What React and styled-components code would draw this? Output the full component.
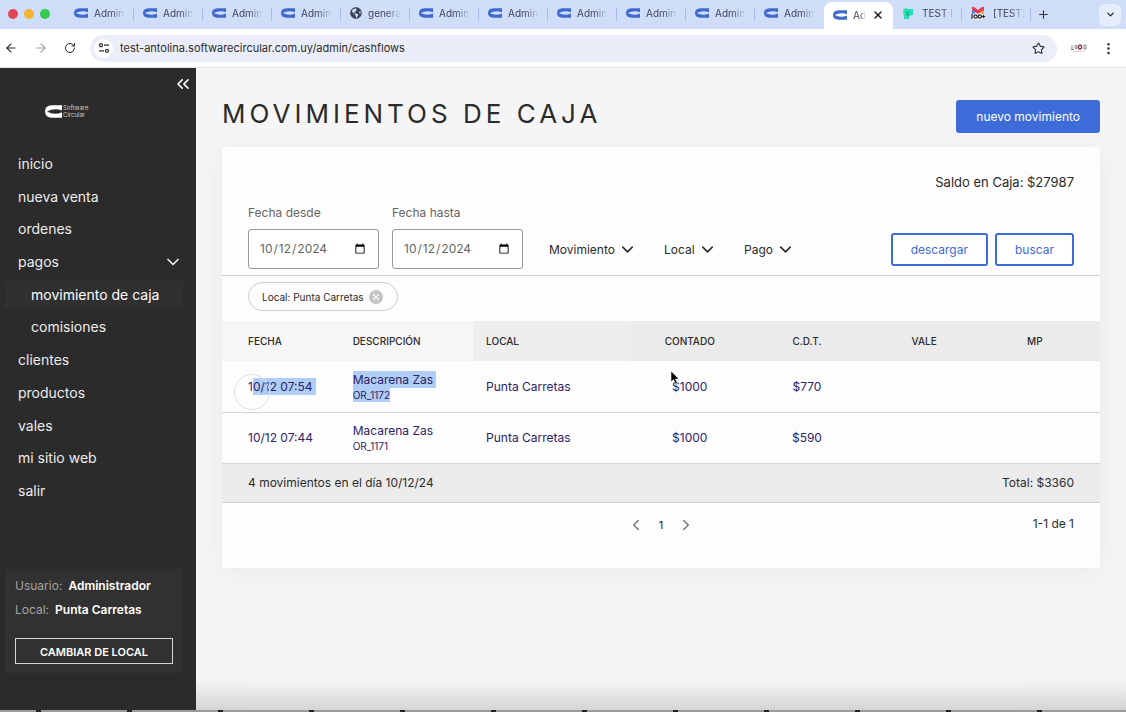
import React from 'react'
import styled, { createGlobalStyle } from 'styled-components'
import {
  ArrowLeft,
  ArrowRight,
  ChevronDown,
  ChevronLeft,
  ChevronRight,
  ChevronsLeft,
  EllipsisVertical,
  Plus,
  RotateCw,
  Star,
  X,
} from 'lucide-react'
import { FaGlobeAmericas } from 'react-icons/fa'

const GlobalStyle = createGlobalStyle`
  * {
    box-sizing: border-box;
  }
  body {
    margin: 0;
    font-family: Inter, "Liberation Sans", sans-serif;
    color: #2b2b2b;
    background: #f5f5f5;
  }
  button, input, select {
    font: inherit;
    color: inherit;
  }
  button {
    cursor: pointer;
  }
`

const Window = styled.div`
  display: flex;
  flex-direction: column;
  min-height: 100vh;
  overflow: hidden;
`

/* browser chrome */
const TabStrip = styled.div`
  display: flex;
  align-items: center;
  height: 29px;
  padding: 0 5px 0 8px;
  background: #cfddf9;
`
const Lights = styled.div`
  display: flex;
  gap: 6px;
  width: 57px;
  flex-shrink: 0;
`
const Light = styled.span`
  width: 10px;
  height: 10px;
  margin-bottom: 2px;
  border-radius: 50%;
  background: ${(props) => props.$color};
`
const Tab = styled.button`
  display: flex;
  align-items: center;
  gap: 6px;
  width: 69px;
  height: 27px;
  padding: 0 9px 1px;
  border: 0;
  font-size: 10px;
  color: #3c4459;
  background: ${(props) => (props.$active ? '#fff' : 'none')};
  border-radius: ${(props) => (props.$active ? '8px 8px 0 0' : '0')};
  align-self: ${(props) => (props.$active ? 'flex-end' : 'flex-start')};
  svg {
    flex-shrink: 0;
  }
`
const WideTab = styled(Tab)`
  gap: 8px;
  padding: 0 6px 1px 9px;
`
const TabText = styled.span`
  flex: 1;
  min-width: 0;
  overflow: hidden;
  white-space: nowrap;
  text-align: left;
  mask-image: linear-gradient(90deg, #000 55%, transparent);
`
const Divider = styled.span`
  width: 1px;
  height: 13px;
  margin-left: -1px;
  background: #a9bce4;
`
const PlainButton = styled.button`
  display: flex;
  align-items: center;
  justify-content: center;
  padding: 0;
  border: 0;
  background: none;
  color: ${(props) => props.$color || 'inherit'};
`
const NewTab = styled(PlainButton)`
  width: 25px;
  height: 24px;
`
const TabSearch = styled(PlainButton)`
  width: 22px;
  height: 22px;
  margin-left: auto;
  border-radius: 6px;
  background: #e6eefc;
`
const AddressBar = styled.div`
  display: flex;
  align-items: center;
  gap: 14px;
  height: 39px;
  padding: 0 10px 0 4px;
  background: #fff;
  border-bottom: 1px solid #e0e2ea;
`
const NavButtons = styled.div`
  display: flex;
  gap: 16px;
`
const UrlBox = styled.div`
  display: flex;
  align-items: center;
  flex: 1;
  gap: 7px;
  height: 27px;
  padding: 0 12px 0 4px;
  border-radius: 14px;
  background: #ebeef8;
`
const SiteInfo = styled(PlainButton)`
  width: 19px;
  height: 19px;
  border-radius: 50%;
  background: #fff;
`
const Url = styled.input`
  flex: 1;
  min-width: 0;
  padding: 0;
  border: 0;
  background: none;
  font-size: 11px;
`

/* page */
const Page = styled.div`
  display: flex;
  flex: 1;
`
const Sidebar = styled.aside`
  display: flex;
  flex-direction: column;
  flex-shrink: 0;
  width: 196px;
  padding: 6px 13px 37px 5px;
  background: #2b2b2b;
  color: #fff;
`
const Collapse = styled(PlainButton)`
  align-self: flex-end;
  width: 20px;
  height: 20px;
  margin-right: -10px;
`
const Logo = styled.a`
  display: flex;
  align-items: center;
  gap: 1px;
  height: 14px;
  margin: 10px 0 29px 40px;
  color: #c9c9c9;
  font-size: 6px;
  line-height: 7px;
  text-decoration: none;
`
const Menu = styled.nav`
  display: grid;
  grid-auto-rows: 1fr;
  height: 360px;
`
const MenuItem = styled.a`
  display: flex;
  align-items: center;
  justify-content: space-between;
  margin: 3px 0;
  padding: 0 0 0 ${(props) => (props.$sub ? '26px' : '13px')};
  font-size: 14px;
  color: ${(props) => (props.$active ? '#fff' : '#ececec')};
  background: ${(props) => (props.$active ? '#303030' : 'none')};
  text-decoration: none;
`
const UserCard = styled.div`
  display: flex;
  flex-direction: column;
  margin-top: auto;
  padding: 5px 10px 9px;
  background: #313131;
  font-size: 12px;
  line-height: 24px;
`
const UserLine = styled.div`
  color: #a3a3a3;
  b {
    margin-left: 6px;
    font-weight: 600;
    color: #fff;
  }
`
const ChangeStore = styled.button`
  height: 26px;
  margin-top: 16px;
  border: 1px solid #d5d5d5;
  background: none;
  font-size: 11px;
  font-weight: 600;
  color: #fff;
`
const Main = styled.main`
  flex: 1;
  min-width: 0;
  padding: 32px 26px 0;
  background: linear-gradient(#f5f5f5 calc(100% - 30px), #d4d4d4);
`
const Header = styled.header`
  display: flex;
  justify-content: space-between;
  height: 47px;
`
const Title = styled.h1`
  margin: 0;
  font-size: 26px;
  line-height: 28px;
  font-weight: 400;
  letter-spacing: 4px;
  text-transform: uppercase;
`
const Button = styled.button`
  height: 33px;
  padding: 0 18px;
  border: 2px solid #3d6bd8;
  border-radius: 3px;
  font-size: 12px;
  white-space: nowrap;
  background: ${(props) => (props.$primary ? '#3d6bd8' : '#fff')};
  color: ${(props) => (props.$primary ? '#fff' : '#3d6bd8')};
`
const Card = styled.section`
  position: relative;
  background: #fdfdfd;
  box-shadow: 0 4px 24px rgba(0, 0, 0, 0.05);
`
const Balance = styled.p`
  margin: 0;
  padding: 25px 26px 0;
  font-size: 13px;
  line-height: 20px;
  text-align: right;
`
const Filters = styled.form`
  display: flex;
  align-items: flex-end;
  gap: 13px;
  padding: 11px 26px 6px;
  border-bottom: 1px solid #d0d0d0;
`
const Field = styled.label`
  display: flex;
  flex-direction: column;
  gap: 6px;
  font-size: 12px;
  line-height: 20px;
  color: #666;
`
const DateInput = styled.input`
  width: 131px;
  height: 40px;
  padding: 0 10px;
  border: 1px solid #999;
  border-radius: 3px;
  background: #fff;
`
const Selects = styled.div`
  display: flex;
  gap: 27px;
  flex: 1;
  margin-left: 13px;
`
const SelectBox = styled.div`
  position: relative;
  display: flex;
  align-items: center;
  height: 40px;
  svg {
    position: absolute;
    right: 0;
    pointer-events: none;
  }
`
const Select = styled.select`
  appearance: none;
  padding: 0 22px 0 0;
  border: 0;
  background: none;
  font-size: 12px;
`
const Actions = styled.div`
  display: flex;
  align-items: center;
  gap: 7px;
  height: 40px;
`
const Chips = styled.div`
  display: flex;
  padding: 6px 26px 10px;
`
const Chip = styled.span`
  display: flex;
  align-items: center;
  gap: 5px;
  height: 29px;
  padding: 0 14px 0 13px;
  border: 1px solid #ccc;
  border-radius: 15px;
  font-size: 10px;
`
const ChipClose = styled(PlainButton)`
  width: 14px;
  height: 14px;
  border-radius: 50%;
  background: #c4c4c4;
`
const Table = styled.table`
  width: 100%;
  table-layout: fixed;
  border-collapse: collapse;
`
const HeadCell = styled.th`
  height: 40px;
  padding: 0 13px;
  font-size: 10px;
  font-weight: 500;
  text-align: ${(props) => (props.$center ? 'center' : 'left')};
  background: ${(props) => props.$bg || '#ebebeb'};
  &:first-child {
    padding-left: 26px;
  }
  &:last-child {
    padding-right: 26px;
  }
`
const Cell = styled.td`
  height: 51px;
  padding: 0 13px;
  border-bottom: 1px solid #d6d6d6;
  font-size: 12px;
  line-height: 17px;
  color: #2d2369;
  white-space: nowrap;
  text-align: ${(props) => (props.$center ? 'center' : 'left')};
  &:first-child {
    padding-left: 26px;
  }
`
const FootCell = styled.td`
  height: 39px;
  padding: 0 26px;
  border-top: 1px solid #d0d0d0;
  border-bottom: 1px solid #d0d0d0;
  background: #ebebeb;
  font-size: 12px;
  text-align: ${(props) => (props.$right ? 'right' : 'left')};
`
const Order = styled.div`
  font-size: 10px;
  line-height: 14px;
`
const Mark = styled.span`
  display: inline-block;
  padding-right: ${(props) => (props.$space ? '3px' : '0')};
  background: ${(props) => (props.$on ? '#b0cdf6' : 'none')};
`
const Pagination = styled.div`
  display: grid;
  grid-template-columns: 1fr auto 1fr;
  height: 65px;
  padding: 11px 26px;
  font-size: 12px;
  line-height: 20px;
`
const Pages = styled.div`
  grid-column: 2;
  display: flex;
  gap: 12px;
  height: 22px;
  align-items: center;
`
const PageNumber = styled.span`
  width: 8px;
  text-align: center;
  font-size: 11px;
`
const Range = styled.span`
  text-align: right;
`
const Dock = styled.div`
  display: flex;
  justify-content: space-between;
  height: 2px;
  padding: 0 84px 0 36px;
  background: #9b9b9b;
`
const DockMark = styled.span`
  width: 5px;
  background: #222;
`
const ClickRing = styled.span`
  position: absolute;
  left: 12px;
  top: 227px;
  width: 36px;
  height: 36px;
  border: 1px solid #e2e2e6;
  border-radius: 50%;
  pointer-events: none;
`
const Pointer = styled.svg`
  position: absolute;
  left: 51%;
  top: 223px;
  pointer-events: none;
`

function RingIcon({ width, height, color }) {
  return (
    <svg width={width} height={height} viewBox="0 0 50 40" preserveAspectRatio="none" fill={color}>
      <path d="M50 1 H20 Q0 2 0 20 Q0 38 20 39 H50 V22 Q27 33 6 20 Q27 8 50 17 Z" />
    </svg>
  )
}

function GreenIcon() {
  return (
    <svg width="12" height="13" viewBox="0 0 12 13">
      <path d="M1 2 L5 1 V12 L2 12 Z" fill="#35dcae" />
      <path d="M4 2 H11 V8 L7 9 V12 H4 Z" fill="#22e0b8" />
      <path d="M4 5 L7 4 V9 H4 Z" fill="#1bb99a" />
    </svg>
  )
}

function MailIcon() {
  return (
    <svg width="14" height="14" viewBox="0 0 14 14">
      <path d="M1 1 L4 3 V8 H1 Z" fill="#4285f4" />
      <path d="M13 1 L10 3 V8 H13 Z" fill="#f4b400" />
      <path d="M1 2 Q1 0 3 1 L7 4 L11 1 Q13 0 13 2 V4 L7 8 L1 4 Z" fill="#e23b52" />
      <g fill="none" stroke="#fff" strokeWidth="3">
        <path d="M1 8 V13" />
        <circle cx="4.5" cy="10.5" r="1.7" />
        <circle cx="8.8" cy="10.5" r="1.7" />
      </g>
      <g fill="none" stroke="#222" strokeWidth="1.2">
        <path d="M1 8 V13" />
        <circle cx="4.5" cy="10.5" r="1.7" />
        <circle cx="8.8" cy="10.5" r="1.7" />
        <path d="M11 10.5 H14 M12.5 9 V12" />
      </g>
    </svg>
  )
}

function TuneIcon() {
  return (
    <svg width="12" height="12" viewBox="0 0 12 12" fill="none" stroke="#333" strokeWidth="1.3">
      <circle cx="3" cy="3.2" r="1.5" />
      <path d="M6 3.2 H11 M1 8.8 H6" />
      <circle cx="9" cy="8.8" r="1.5" />
    </svg>
  )
}

function ExtensionIcon() {
  return (
    <svg width="16" height="8" viewBox="0 0 16 8" fill="none" stroke="#858085">
      <path d="M1 1 V5 M0 5.5 H3 M14.5 1 H13 V5 H15 V1" />
      <ellipse cx="5" cy="3" rx="1" ry="2" />
      <ellipse cx="9" cy="3" rx="1.6" ry="2" stroke="#8c3a46" strokeWidth="1.4" />
      <path d="M2 7.5 H14" stroke="#e2d6d9" />
    </svg>
  )
}

const tabs = ['Admin', 'Admin', 'Admin', 'Admin', 'genera', 'Admin', 'Admin', 'Admin', 'Admin', 'Admin', 'Admin']

const menu = [
  { label: 'inicio' },
  { label: 'nueva venta' },
  { label: 'ordenes' },
  { label: 'pagos', open: true },
  { label: 'movimiento de caja', sub: true, active: true },
  { label: 'comisiones', sub: true },
  { label: 'clientes' },
  { label: 'productos' },
  { label: 'vales' },
  { label: 'mi sitio web' },
  { label: 'salir' },
]

const rows = [
  { time: '10/12 07:54', name: 'Macarena Zas', order: 'OR_1172', store: 'Punta Carretas', cash: '$1000', cdt: '$770', selected: true },
  { time: '10/12 07:44', name: 'Macarena Zas', order: 'OR_1171', store: 'Punta Carretas', cash: '$1000', cdt: '$590' },
]

function Browser() {
  return (
    <>
      <TabStrip>
        <Lights>
          <Light $color="#e0485a" />
          <Light $color="#f3b32f" />
          <Light $color="#35cb4b" />
        </Lights>
        {tabs.map((tab, i) => (
          <React.Fragment key={i}>
            <Tab>
              {tab === 'genera' ? <FaGlobeAmericas size={12} /> : <RingIcon width={14} height={10} color="#4069cc" />}
              <TabText>{tab}</TabText>
            </Tab>
            {i < tabs.length - 1 && <Divider />}
          </React.Fragment>
        ))}
        <Tab $active>
          <RingIcon width={14} height={10} color="#4069cc" />
          <TabText>Ad</TabText>
          <X size={12} strokeWidth={3} color="#222" />
        </Tab>
        <WideTab>
          <GreenIcon />
          <TabText>TEST I</TabText>
        </WideTab>
        <Divider />
        <WideTab>
          <MailIcon />
          <TabText>[TEST]</TabText>
        </WideTab>
        <Divider />
        <NewTab aria-label="Nueva pestaña">
          <Plus size={13} strokeWidth={2} />
        </NewTab>
        <TabSearch aria-label="Buscar pestañas">
          <ChevronDown size={11} strokeWidth={3} />
        </TabSearch>
      </TabStrip>
      <AddressBar>
        <NavButtons>
          <PlainButton aria-label="Atrás">
            <ArrowLeft size={14} />
          </PlainButton>
          <PlainButton aria-label="Adelante" $color="#a0a0a0">
            <ArrowRight size={14} />
          </PlainButton>
          <PlainButton aria-label="Recargar">
            <RotateCw size={12} strokeWidth={2} />
          </PlainButton>
        </NavButtons>
        <UrlBox>
          <SiteInfo aria-label="Información del sitio">
            <TuneIcon />
          </SiteInfo>
          <Url aria-label="Dirección" defaultValue="test-antolina.softwarecircular.com.uy/admin/cashflows" />
          <PlainButton aria-label="Favorito">
            <Star size={13} />
          </PlainButton>
        </UrlBox>
        <PlainButton aria-label="Extensión">
          <ExtensionIcon />
        </PlainButton>
        <PlainButton aria-label="Menú">
          <EllipsisVertical size={15} strokeWidth={2} />
        </PlainButton>
      </AddressBar>
    </>
  )
}

function SideMenu() {
  return (
    <Sidebar>
      <Collapse aria-label="Contraer">
        <ChevronsLeft size={22} />
      </Collapse>
      <Logo href="#">
        <RingIcon width={17} height={13} color="#fff" />
        <span>
          Software
          <br />
          Circular
        </span>
      </Logo>
      <Menu>
        {menu.map((item) => (
          <MenuItem key={item.label} href="#" $sub={item.sub} $active={item.active}>
            {item.label}
            {item.open && <ChevronDown size={20} />}
          </MenuItem>
        ))}
      </Menu>
      <UserCard>
        <UserLine>
          Usuario:<b>Administrador</b>
        </UserLine>
        <UserLine>
          Local:<b>Punta Carretas</b>
        </UserLine>
        <ChangeStore>CAMBIAR DE LOCAL</ChangeStore>
      </UserCard>
    </Sidebar>
  )
}

function FilterSelect({ label }) {
  return (
    <SelectBox>
      <Select aria-label={label}>
        <option>{label}</option>
      </Select>
      <ChevronDown size={19} strokeWidth={2} />
    </SelectBox>
  )
}

function Movements() {
  return (
    <Table>
      <colgroup>
        <col style={{ width: '13.4%' }} />
        <col style={{ width: '15.2%' }} />
        <col style={{ width: '18%' }} />
        <col />
        <col />
        <col />
        <col />
      </colgroup>
      <thead>
        <tr>
          <HeadCell $bg="#f6f6f6">FECHA</HeadCell>
          <HeadCell $bg="#f6f6f6">DESCRIPCIÓN</HeadCell>
          <HeadCell $bg="#eeeeee">LOCAL</HeadCell>
          <HeadCell $center>CONTADO</HeadCell>
          <HeadCell $center>C.D.T.</HeadCell>
          <HeadCell $center>VALE</HeadCell>
          <HeadCell $center>MP</HeadCell>
        </tr>
      </thead>
      <tbody>
        {rows.map((row) => (
          <tr key={row.order}>
            <Cell>
              {row.time[0]}
              <Mark $on={row.selected} $space>
                {row.time.slice(1)}
              </Mark>
            </Cell>
            <Cell>
              <Mark $on={row.selected} $space>
                {row.name}
              </Mark>
              <Order>
                <Mark $on={row.selected}>{row.order}</Mark>
              </Order>
            </Cell>
            <Cell>{row.store}</Cell>
            <Cell $center>{row.cash}</Cell>
            <Cell $center>{row.cdt}</Cell>
            <Cell />
            <Cell />
          </tr>
        ))}
      </tbody>
      <tfoot>
        <tr>
          <FootCell colSpan={4}>4 movimientos en el día 10/12/24</FootCell>
          <FootCell colSpan={3} $right>
            Total: $3360
          </FootCell>
        </tr>
      </tfoot>
    </Table>
  )
}

function App() {
  return (
    <Window>
      <GlobalStyle />
      <Browser />
      <Page>
        <SideMenu />
        <Main>
          <Header>
            <Title>Movimientos de caja</Title>
            <Button $primary>nuevo movimiento</Button>
          </Header>
          <Card>
            <Balance>Saldo en Caja: $27987</Balance>
            <Filters>
              <Field>
                Fecha desde
                <DateInput type="date" defaultValue="2024-10-12" />
              </Field>
              <Field>
                Fecha hasta
                <DateInput type="date" defaultValue="2024-10-12" />
              </Field>
              <Selects>
                <FilterSelect label="Movimiento" />
                <FilterSelect label="Local" />
                <FilterSelect label="Pago" />
              </Selects>
              <Actions>
                <Button type="button">descargar</Button>
                <Button type="button">buscar</Button>
              </Actions>
            </Filters>
            <Chips>
              <Chip>
                Local: Punta Carretas
                <ChipClose aria-label="Quitar filtro" $color="#fff">
                  <X size={10} strokeWidth={3} />
                </ChipClose>
              </Chip>
            </Chips>
            <Movements />
            <Pagination>
              <Pages>
                <PlainButton aria-label="Anterior" $color="#777">
                  <ChevronLeft size={18} />
                </PlainButton>
                <PageNumber>1</PageNumber>
                <PlainButton aria-label="Siguiente" $color="#777">
                  <ChevronRight size={18} />
                </PlainButton>
              </Pages>
              <Range>1-1 de 1</Range>
            </Pagination>
            <ClickRing />
            <Pointer width="10" height="15" viewBox="0 0 10 15">
              <path d="M1 1 V12 L3.5 9.6 L5.4 14 L7.3 13.2 L5.5 9 H9 Z" fill="#000" stroke="#fff" strokeWidth="0.6" />
            </Pointer>
          </Card>
        </Main>
      </Page>
      <Dock>
        {Array.from({ length: 12 }, (_, i) => (
          <DockMark key={i} />
        ))}
      </Dock>
    </Window>
  )
}

export default App
